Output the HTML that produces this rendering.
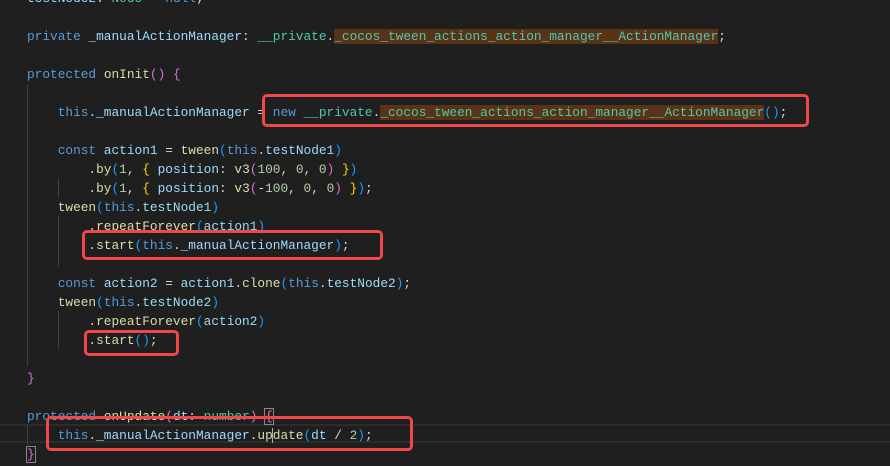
<!DOCTYPE html>
<html><head><style>
html,body{margin:0;padding:0;background:#1f1f1f;width:890px;height:466px;overflow:hidden;position:relative}
pre{position:absolute;left:27px;top:-11px;margin:0;font-family:"Liberation Mono",monospace;font-size:12.8px;line-height:19px;color:#d4d4d4;white-space:pre}
.k{color:#569cd6}.p{color:#9cdcfe}.f{color:#dcdcaa}.t{color:#4ec9b0}.n{color:#b5cea8}
.g{color:#ffd700}.m{color:#da70d6}.b{color:#179fff}
.h{background:#5a3216}
.box{position:absolute;border:3px solid #f0474a;border-radius:5px;box-sizing:border-box}
.cl{position:absolute;left:0;width:890px;height:2px;background:#2c2c2c}
.ig{position:absolute;width:1px;background:#404040}
</style></head><body>
<div class="cl" style="top:424px"></div>
<div class="cl" style="top:441px"></div>
<div class="ig" style="left:27px;top:84px;height:282px"></div>
<div class="ig" style="left:58px;top:178px;height:20px"></div>
<div class="ig" style="left:58px;top:216px;height:50px"></div>
<div class="ig" style="left:58px;top:311px;height:38px"></div>
<div class="ig" style="left:27px;top:425px;height:20px"></div>
<pre><span class="p">testNode2</span>: <span class="t">Node</span> = <span class="k">null</span>;

<span class="k">private</span> <span class="p">_manualActionManager</span>: <span class="t">__private</span>.<span class="t h">_cocos_tween_actions_action_manager__ActionManager</span>;

<span class="k">protected</span> <span class="f">onInit</span><span class="m">()</span> <span class="m">{</span>

    <span class="k">this</span>.<span class="p">_manualActionManager</span> = <span class="k">new</span> <span class="t">__private</span>.<span class="t h">_cocos_tween_actions_action_manager__ActionManager</span><span class="b">()</span>;

    <span class="k">const</span> <span class="p">action1</span> = <span class="f">tween</span><span class="b">(</span><span class="k">this</span>.<span class="p">testNode1</span><span class="b">)</span>
        .<span class="f">by</span><span class="b">(</span><span class="n">1</span>, <span class="g">{</span> <span class="p">position</span>: <span class="f">v3</span><span class="m">(</span><span class="n">100</span>, <span class="n">0</span>, <span class="n">0</span><span class="m">)</span> <span class="g">}</span><span class="b">)</span>
        .<span class="f">by</span><span class="b">(</span><span class="n">1</span>, <span class="g">{</span> <span class="p">position</span>: <span class="f">v3</span><span class="m">(</span>-<span class="n">100</span>, <span class="n">0</span>, <span class="n">0</span><span class="m">)</span> <span class="g">}</span><span class="b">)</span>;
    <span class="f">tween</span><span class="b">(</span><span class="k">this</span>.<span class="p">testNode1</span><span class="b">)</span>
        .<span class="f">repeatForever</span><span class="b">(</span><span class="p">action1</span><span class="b">)</span>
        .<span class="f">start</span><span class="b">(</span><span class="k">this</span>.<span class="p">_manualActionManager</span><span class="b">)</span>;

    <span class="k">const</span> <span class="p">action2</span> = <span class="p">action1</span>.<span class="f">clone</span><span class="b">(</span><span class="k">this</span>.<span class="p">testNode2</span><span class="b">)</span>;
    <span class="f">tween</span><span class="b">(</span><span class="k">this</span>.<span class="p">testNode2</span><span class="b">)</span>
        .<span class="f">repeatForever</span><span class="b">(</span><span class="p">action2</span><span class="b">)</span>
        .<span class="f">start</span><span class="b">()</span>;

<span class="m">}</span>

<span class="k">protected</span> <span class="f">onUpdate</span><span class="m">(</span><span class="p">dt</span>: <span class="t">number</span><span class="m">)</span> <span class="m" style="outline:1px solid #888">{</span>
    <span class="k">this</span>.<span class="p">_manualActionManager</span>.<span class="f">up</span><span style="border-left:1px solid #aeafad;margin-left:-1px"></span><span class="f">date</span><span class="b">(</span><span class="p">dt</span> / <span class="n">2</span><span class="b">)</span>;
<span class="m" style="outline:1px solid #888">}</span></pre>
<div class="box" style="left:262px;top:94px;width:547px;height:33px"></div>
<div class="box" style="left:82px;top:230px;width:301px;height:30px"></div>
<div class="box" style="left:84px;top:330px;width:95px;height:26px"></div>
<div class="box" style="left:46px;top:416px;width:367px;height:35px"></div>
</body></html>
